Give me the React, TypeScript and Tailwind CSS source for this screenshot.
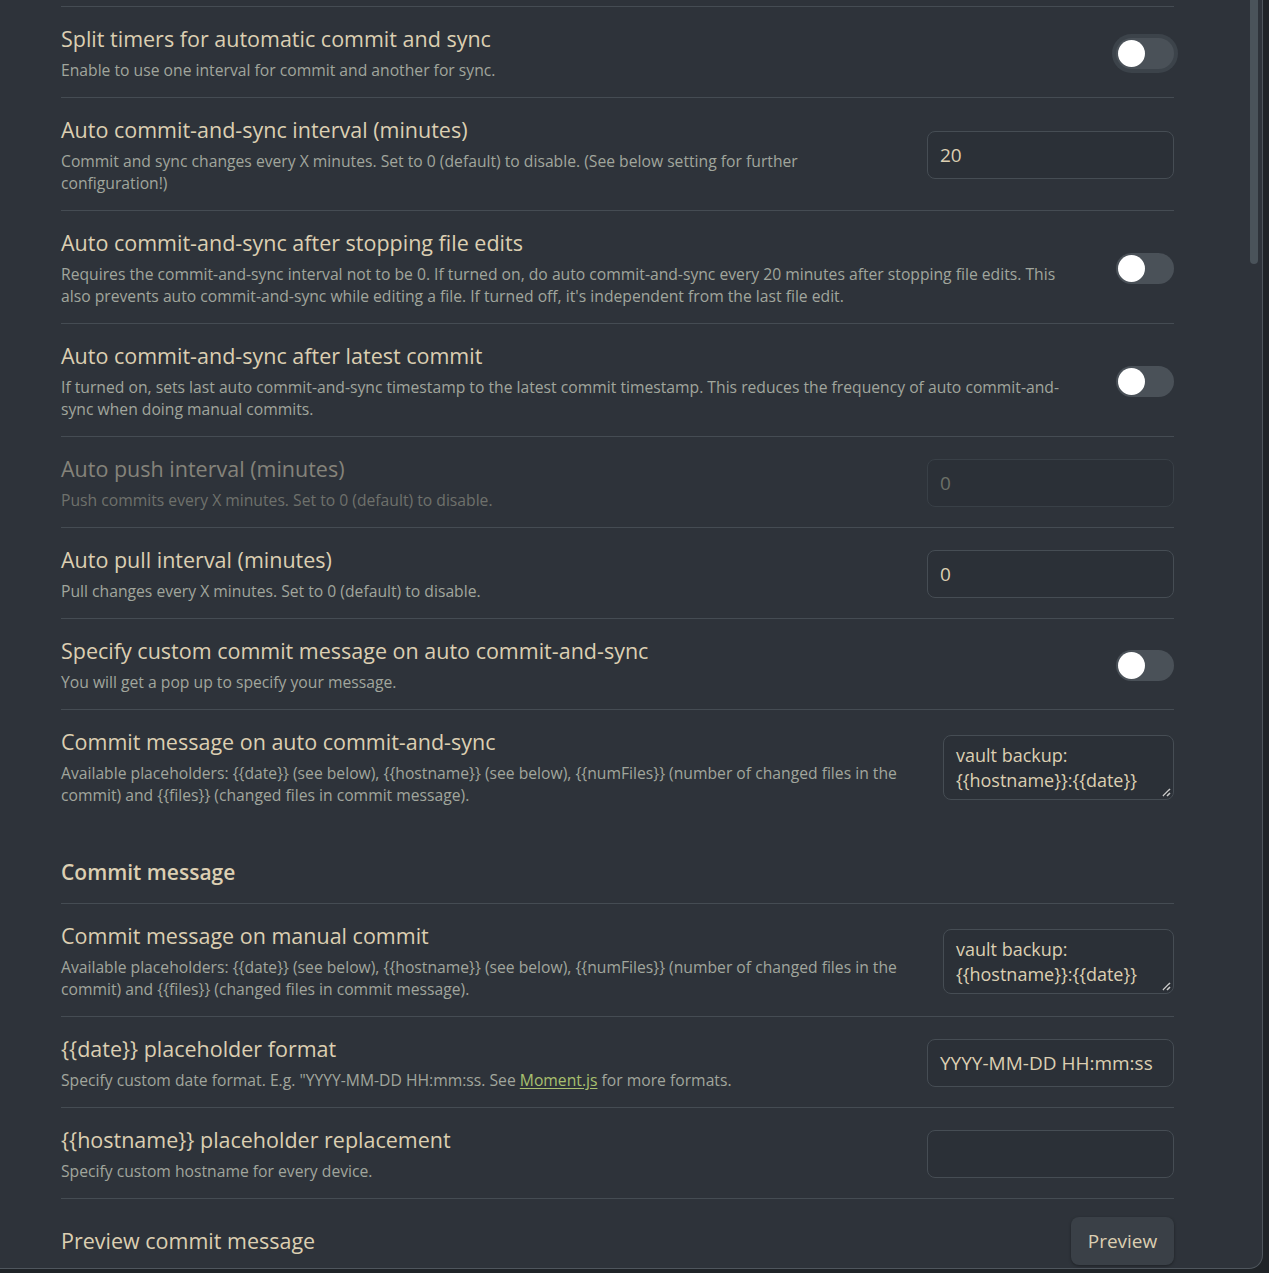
import React from 'react'

type Control =
  | { kind: 'toggle'; focused?: boolean }
  | { kind: 'input'; value: string; disabled?: boolean }
  | { kind: 'textarea'; value: string }
  | { kind: 'button'; label: string }

interface Item {
  name: string
  desc?: React.ReactNode
  control: Control
  disabled?: boolean
}

const PLACEHOLDERS =
  'Available placeholders: {{date}} (see below), {{hostname}} (see below), {{numFiles}} (number of changed files in the commit) and {{files}} (changed files in commit message).'

const ITEMS: Item[] = [
  {
    name: 'Split timers for automatic commit and sync',
    desc: 'Enable to use one interval for commit and another for sync.',
    control: { kind: 'toggle', focused: true },
  },
  {
    name: 'Auto commit-and-sync interval (minutes)',
    desc: 'Commit and sync changes every X minutes. Set to 0 (default) to disable. (See below setting for further configuration!)',
    control: { kind: 'input', value: '20' },
  },
  {
    name: 'Auto commit-and-sync after stopping file edits',
    desc: "Requires the commit-and-sync interval not to be 0. If turned on, do auto commit-and-sync every 20 minutes after stopping file edits. This also prevents auto commit-and-sync while editing a file. If turned off, it's independent from the last file edit.",
    control: { kind: 'toggle' },
  },
  {
    name: 'Auto commit-and-sync after latest commit',
    desc: 'If turned on, sets last auto commit-and-sync timestamp to the latest commit timestamp. This reduces the frequency of auto commit-and-sync when doing manual commits.',
    control: { kind: 'toggle' },
  },
  {
    name: 'Auto push interval (minutes)',
    desc: 'Push commits every X minutes. Set to 0 (default) to disable.',
    control: { kind: 'input', value: '0', disabled: true },
    disabled: true,
  },
  {
    name: 'Auto pull interval (minutes)',
    desc: 'Pull changes every X minutes. Set to 0 (default) to disable.',
    control: { kind: 'input', value: '0' },
  },
  {
    name: 'Specify custom commit message on auto commit-and-sync',
    desc: 'You will get a pop up to specify your message.',
    control: { kind: 'toggle' },
  },
  {
    name: 'Commit message on auto commit-and-sync',
    desc: PLACEHOLDERS,
    control: { kind: 'textarea', value: 'vault backup: {{hostname}}:{{date}}' },
  },
]

const ITEMS2: Item[] = [
  {
    name: 'Commit message on manual commit',
    desc: PLACEHOLDERS,
    control: { kind: 'textarea', value: 'vault backup: {{hostname}}:{{date}}' },
  },
  {
    name: '{{date}} placeholder format',
    desc: (
      <>
        Specify custom date format. E.g. "YYYY-MM-DD HH:mm:ss. See{' '}
        <a className="text-[#a9c06f] underline underline-offset-2">Moment.js</a> for more formats.
      </>
    ),
    control: { kind: 'input', value: 'YYYY-MM-DD HH:mm:ss' },
  },
  {
    name: '{{hostname}} placeholder replacement',
    desc: 'Specify custom hostname for every device.',
    control: { kind: 'input', value: '' },
  },
  {
    name: 'Preview commit message',
    control: { kind: 'button', label: 'Preview' },
  },
]

function Toggle({ focused }: { focused?: boolean }) {
  return (
    <div className={focused ? 'rounded-full p-[4px] bg-[#3c434a]' : 'p-[4px]'}>
      <div className="w-[58px] h-[31px] rounded-full bg-[#4a5158] flex items-center px-[2px]">
        <div className="w-[27px] h-[27px] rounded-full bg-white" />
      </div>
    </div>
  )
}

function ControlEl({ c }: { c: Control }) {
  if (c.kind === 'toggle') return <Toggle focused={c.focused} />
  if (c.kind === 'input')
    return (
      <div
        className={
          'w-[247px] h-[48px] rounded-[8px] border flex items-center px-[12px] text-[19px] whitespace-nowrap overflow-hidden bg-[#2b3037] ' +
          (c.disabled ? 'border-[#394047] text-[#6c7068]' : 'border-[#464d54] text-[#dccfb2]')
        }
      >
        {c.value}
      </div>
    )
  if (c.kind === 'textarea')
    return (
      <div className="relative w-[231px] h-[65px] rounded-[8px] border border-[#464d54] bg-[#2b3037] px-[12px] pt-[7px] text-[18px] leading-[25px] text-[#dccfb2]">
        {c.value}
        <svg className="absolute right-[2px] bottom-[2px]" width="11" height="11" viewBox="0 0 11 11">
          <path d="M10 3 L3 10 M10 7 L7 10" stroke="#c8c8c8" strokeWidth="1.6" />
          <path d="M10 4.5 L4.5 10" stroke="#1a1d21" strokeWidth="1" />
        </svg>
      </div>
    )
  return (
    <button className="w-[103px] h-[48px] rounded-[8px] bg-[#3a4047] text-[19px] text-[#dccfb2] shadow-[0_1px_3px_rgba(0,0,0,0.35)]">
      {c.label}
    </button>
  )
}

function Row({ item, first }: { item: Item; first?: boolean }) {
  const nameCls = item.disabled ? 'text-[#85837a]' : 'text-[#dccfb2]'
  const descCls = item.disabled ? 'text-[#6e716c]' : 'text-[#a1a69d]'
  return (
    <div className={'flex items-center pt-[18px] pb-[16px] ' + (first ? '' : 'border-t border-[#454c53]')}>
      <div className="flex-1 pr-[36px]">
        <div className={'text-[21.5px] leading-[28px] ' + nameCls}>{item.name}</div>
        {item.desc && (
          <div className={'mt-[6px] text-[15.7px] leading-[22px] ' + descCls}>{item.desc}</div>
        )}
      </div>
      <div className={item.control.kind === 'toggle' ? '-mr-[4px]' : ''}>
        <ControlEl c={item.control} />
      </div>
    </div>
  )
}

export default function App() {
  return (
    <div
      className="w-[1269px] h-[1273px] bg-[#1f2327] overflow-hidden"
      style={{ fontFamily: '"Open Sans", "Noto Sans", sans-serif' }}
    >
      <div className="relative w-[1263px] h-[1269px] bg-[#2e333a] border-r border-b border-[#4f565d] rounded-br-[14px] overflow-hidden">
        <div className="ml-[61px] w-[1113px] pt-[6px]">
          <div className="border-t border-[#454c53]">
            {ITEMS.map((it, i) => (
              <Row key={it.name} item={it} first={i === 0} />
            ))}
          </div>
          <div className="pt-[36px] pb-[17px] text-[21px] font-semibold leading-[28px] text-[#dccfb2]">
            Commit message
          </div>
          <div className="border-t border-[#454c53]">
            {ITEMS2.map((it, i) => (
              <Row key={it.name} item={it} first={i === 0} />
            ))}
          </div>
        </div>
        <div className="absolute left-[1250px] top-0 w-[8px] h-[264px] rounded-b-full bg-[#4a535a]" />
      </div>
    </div>
  )
}
